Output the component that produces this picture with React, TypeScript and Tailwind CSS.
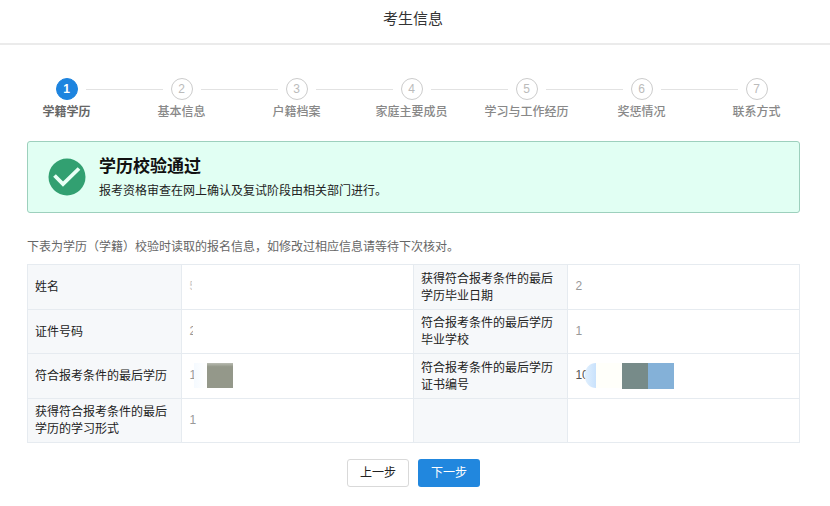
import clsx from "clsx"

const steps = ["学籍学历", "基本信息", "户籍档案", "家庭主要成员", "学习与工作经历", "奖惩情况", "联系方式"]

const th = "border border-[#e6ebf0] bg-[#f6f8fa] pt-0.5 pr-2 pl-[7px] text-left font-normal text-[#222]"
const td = "border border-[#e6ebf0] px-[7px] text-[#999]"

function Stepper() {
  return (
    <ol className="grid grid-cols-7 pr-4 pl-[9px]">
      {steps.map((label, i) => (
        <li key={label} className="flex flex-col items-center">
          <div className="flex w-full items-center gap-2">
            <span className={clsx("h-px flex-1", i > 0 && "bg-[#e2e2e2]")} />
            <span
              className={clsx(
                "flex size-[22px] items-center justify-center rounded-full border text-xs",
                i === 0 ? "border-[#1d84df] bg-[#1d84df] font-bold text-white" : "border-[#ccc] text-[#bbb]"
              )}
            >
              {i + 1}
            </span>
            <span className={clsx("h-px flex-1", i < steps.length - 1 && "bg-[#e2e2e2]")} />
          </div>
          <span className={clsx("mt-1 text-xs", i === 0 ? "font-bold text-[#666]" : "font-medium text-[#888]")}>
            {label}
          </span>
        </li>
      ))}
    </ol>
  )
}

export default function App() {
  return (
    <main className="min-h-dvh bg-white font-['Liberation_Sans','Noto_Sans_CJK_SC',sans-serif] text-[#333]">
      <header className="flex h-[45px] justify-center border-b-2 border-[#ebebeb] pt-2 pr-1">
        <h1 className="text-[15px] leading-[22px]">考生信息</h1>
      </header>

      <div className="pt-[33px]">
        <Stepper />

        <div className="pr-[30px] pl-[27px]">
          <section className="mt-[21px] flex h-[72px] items-center rounded-[3px] border border-[#9dd0bd] bg-[#e1fff3] pl-5">
            <svg viewBox="0 0 38 38" className="size-[38px]" aria-hidden="true">
              <circle cx="19" cy="19" r="18.5" fill="#32a071" />
              <path d="M6.5 17.5 15 26 31 10.500" fill="none" stroke="#e9fff5" strokeWidth="3.8" />
            </svg>
            <div className="ml-[13px] pt-0.5">
              <h2 className="text-[17px] leading-[26px] font-bold text-[#111]">学历校验通过</h2>
              <p className="text-xs leading-[22px] text-[#222]">报考资格审查在网上确认及复试阶段由相关部门进行。</p>
            </div>
          </section>

          <p className="mt-6 text-xs leading-5 text-[#666]">
            下表为学历（学籍）校验时读取的报名信息，如修改过相应信息请等待下次核对。
          </p>

          <table className="mt-[7px] h-[179px] w-full table-fixed border-collapse text-xs leading-[17px]">
            <colgroup>
              <col className="w-1/5" />
              <col className="w-[30%]" />
              <col className="w-1/5" />
              <col className="w-[30%]" />
            </colgroup>
            <tbody>
              <tr>
                <th scope="row" className={th}>姓名</th>
                <td className={td}>
                  <div className="flex items-center text-[#ccc]">
                    <span>5</span>
                    <span className="relative -ml-1 h-4 w-5 bg-white" />
                  </div>
                </td>
                <th scope="row" className={th}>获得符合报考条件的最后学历毕业日期</th>
                <td className={td}>2</td>
              </tr>
              <tr>
                <th scope="row" className={th}>证件号码</th>
                <td className={td}>
                  <div className="flex items-center">
                    <span>2</span>
                    <span className="relative -ml-[3px] h-4 w-5 bg-white" />
                  </div>
                </td>
                <th scope="row" className={th}>符合报考条件的最后学历毕业学校</th>
                <td className={td}>1</td>
              </tr>
              <tr>
                <th scope="row" className={th}>符合报考条件的最后学历</th>
                <td className={td}>
                  <div className="flex items-center">
                    <span>1</span>
                    <span className="relative -ml-[2px] h-[25px] w-[13px] bg-linear-to-r from-[#f5faff] to-white" />
                    <span className="h-[25px] w-[26px] bg-linear-to-b from-[#b9bcb2] to-[#94988a] to-15%" />
                  </div>
                </td>
                <th scope="row" className={th}>符合报考条件的最后学历证书编号</th>
                <td className={td}>
                  <div className="flex items-center">
                    <span className="text-[#555]">10</span>
                    <span className="relative -ml-1 h-[25px] w-[11px] rounded-l-full bg-linear-to-r from-[#e0effd] to-[#c9e2fc]" />
                    <span className="h-[25px] w-[26px] bg-[#fffffa]" />
                    <span className="h-[26px] w-[26px] bg-[#778b89]" />
                    <span className="h-[26px] w-[26px] bg-[#84b1d8]" />
                  </div>
                </td>
              </tr>
              <tr>
                <th scope="row" className={th}>获得符合报考条件的最后学历的学习形式</th>
                <td className={td}>1</td>
                <td className={th} />
                <td className={td} />
              </tr>
            </tbody>
          </table>

          <div className="flex justify-center gap-[9px] py-4">
            <button type="button" className="h-7 w-[62px] rounded-[3px] border border-[#d9d9d9] bg-white text-xs text-[#222]">
              上一步
            </button>
            <button type="button" className="h-7 w-[62px] rounded-[3px] bg-[#2187de] text-xs text-white">
              下一步
            </button>
          </div>
        </div>
      </div>
    </main>
  )
}
